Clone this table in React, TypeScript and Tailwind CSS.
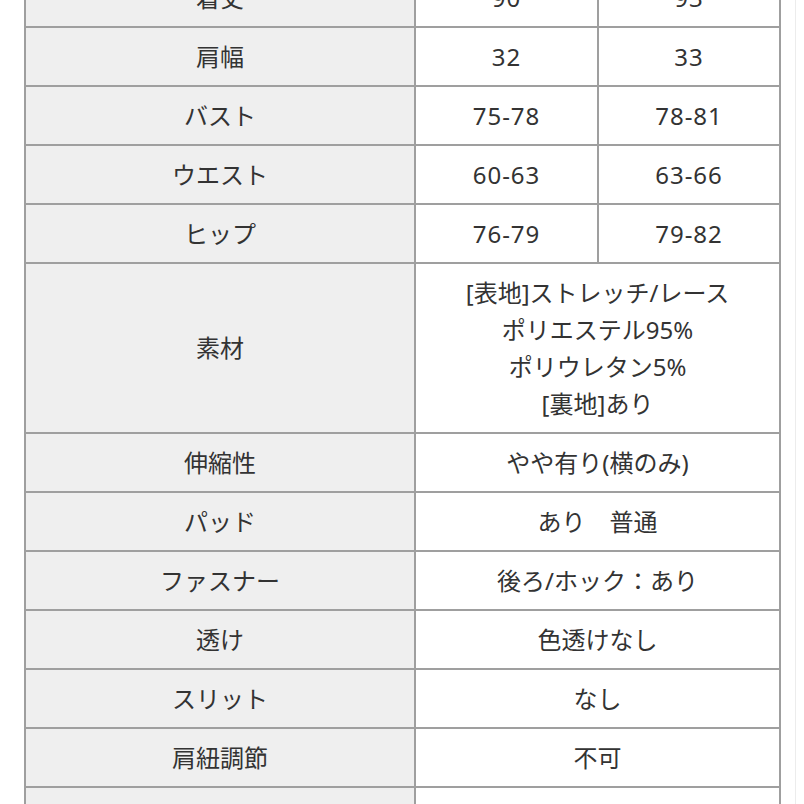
const sizeRows = [
  { label: '着丈', a: '90', b: '93' },
  { label: '肩幅', a: '32', b: '33' },
  { label: 'バスト', a: '75-78', b: '78-81' },
  { label: 'ウエスト', a: '60-63', b: '63-66' },
  { label: 'ヒップ', a: '76-79', b: '79-82' },
];

const detailRows = [
  { label: '伸縮性', value: 'やや有り(横のみ)' },
  { label: 'パッド', value: 'あり　普通' },
  { label: 'ファスナー', value: '後ろ/ホック：あり' },
  { label: '透け', value: '色透けなし' },
  { label: 'スリット', value: 'なし' },
  { label: '肩紐調節', value: '不可' },
  { label: '裏地', value: 'あり' },
];

const th = 'border-2 border-[#9f9f9f] bg-[#efefef] h-[59px] p-0 font-normal text-center';
const td = 'border-2 border-[#9f9f9f] bg-white h-[59px] p-0 text-center';

export default function App() {
  return (
    <div
      className="w-[804px] h-[804px] overflow-hidden bg-white text-[#333] text-[24px]"
      style={{ fontFamily: '"Noto Sans", "Noto Sans CJK JP", sans-serif' }}
    >
      <div className="flex">
        <div className="w-[24px]" />
        <table className="-mt-[33px] border-collapse table-fixed w-[755px]">
          <colgroup>
            <col className="w-[390px]" />
            <col className="w-[183px]" />
            <col className="w-[182px]" />
          </colgroup>
          <tbody>
            {sizeRows.map((r) => (
              <tr key={r.label}>
                <th className={th}>{r.label}</th>
                <td className={`${td} tracking-[0.04em]`}>{r.a}</td>
                <td className={`${td} tracking-[0.04em]`}>{r.b}</td>
              </tr>
            ))}
            <tr>
              <th className={`${th} h-[170px]`}>素材</th>
              <td className={`${td} h-[170px] leading-[37px]`} colSpan={2}>
                <div>[表地]ストレッチ/レース</div>
                <div>ポリエステル95%</div>
                <div>ポリウレタン5%</div>
                <div>[裏地]あり</div>
              </td>
            </tr>
            {detailRows.map((r) => (
              <tr key={r.label}>
                <th className={th}>{r.label}</th>
                <td className={td} colSpan={2}>
                  {r.value}
                </td>
              </tr>
            ))}
          </tbody>
        </table>
        <div className="ml-[14px] w-px bg-[#ececec]" />
      </div>
    </div>
  );
}
